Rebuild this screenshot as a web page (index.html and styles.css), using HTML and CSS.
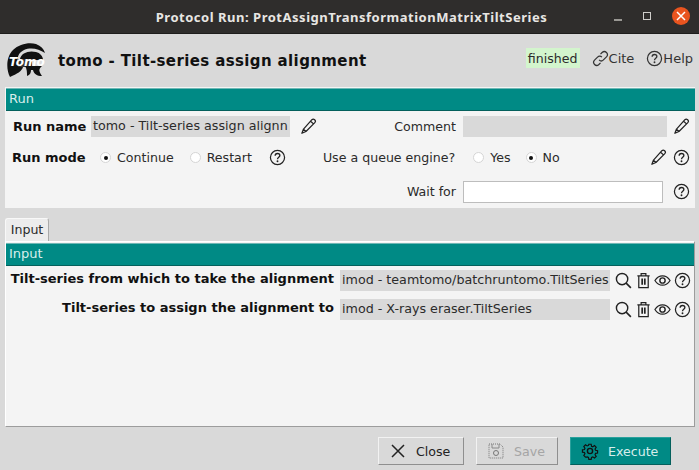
FILE: index.html
```html
<!DOCTYPE html>
<html lang="en">
<head>
    <meta charset="utf-8" />
    <title>Protocol Run</title>
    <link rel="stylesheet" href="styles.css">
</head>
<body>
    <svg class="sprites" width="0" height="0">
        <symbol id="i-pencil" viewBox="0 0 18 18">
            <path d="M12.6 1.8c.8-.8 2-.8 2.9.1s1 2.2.2 3L6.300 14.300 2 16.200l1.700-4.500zM11.200 3.400l3.400 3.100M3.700 11.800l2.600 2.500" fill="none" stroke="currentColor" stroke-width="1.300" stroke-linejoin="round"/>
        </symbol>
        <symbol id="i-help" viewBox="0 0 18 18">
            <circle cx="9" cy="9" r="7.500" fill="none" stroke="currentColor" stroke-width="1.300"/>
            <path d="M6.500 7.200c0-1.500 1.100-2.400 2.500-2.400s2.500.9 2.500 2.200c0 1.800-2.500 1.900-2.500 3.800" fill="none" stroke="currentColor" stroke-width="1.400"/>
            <circle cx="9" cy="13" r="1" fill="currentColor"/>
        </symbol>
        <symbol id="i-search" viewBox="0 0 18 18">
            <circle cx="7.500" cy="7.500" r="6" fill="none" stroke="currentColor" stroke-width="1.500"/>
            <path d="M11.800 11.800l5 5" stroke="currentColor" stroke-width="1.700"/>
        </symbol>
        <symbol id="i-trash" viewBox="0 0 18 18">
            <path d="M2.500 4h13M6.500 4V1.800h5V4M4 4v12.500h10V4" fill="none" stroke="currentColor" stroke-width="1.300"/>
            <path d="M7.600 7v6.500M10.400 7v6.500" stroke="currentColor" stroke-width="1.800"/>
        </symbol>
        <symbol id="i-eye" viewBox="0 0 18 18">
            <path d="M1 9c2-3.300 4.800-5 8-5s6 1.700 8 5c-2 3.300-4.800 5-8 5s-6-1.700-8-5z" fill="none" stroke="currentColor" stroke-width="1.300"/>
            <circle cx="9" cy="9" r="2.800" fill="none" stroke="currentColor" stroke-width="1.500"/>
        </symbol>
    </svg>

    <header class="titlebar">
        <span class="titlebar-text">Protocol Run: ProtAssignTransformationMatrixTiltSeries</span>
        <span class="win-controls">
            <span class="win-min"></span>
            <span class="win-max"></span>
            <span class="win-close">
                <svg width="10" height="10" viewBox="0 0 10 10"><path d="M1 1l8 8M9 1l-8 8" stroke="#fff" stroke-width="1.500"/></svg>
            </span>
        </span>
    </header>

    <main class="window">
        <section class="heading">
            <svg class="logo" width="40" height="36" viewBox="0 0 40 36">
                <path d="M3 34C-1 26-1 14 6 7 12 1 22-1 29 1c5 2 8 5 9 9-6-4-14-6-21-3-6 3-7 7-6 15l5 2c-1 4-6 7-13 10z" fill="#111"/>
                <path d="M13 16c1-6 9-9 16-7 4 1 7 4 7 8l-23 0z" fill="#111"/>
                <path d="M11 16h14v8H11z" fill="#333"/>
                <path d="M18 23h17c-3 3-4 4 0 10-5 0-8-2-9-6h-2c0 3-1 5-4 6 0-4 0-7-2-10z" fill="#111"/>
                <text class="logo-text" x="2" y="23">Tomo</text>
            </svg>
            <h1 class="title">tomo - Tilt-series assign alignment</h1>
            <span class="status">finished</span>
            <a class="head-link cite">
                <svg width="17" height="17" viewBox="0 0 18 18"><path d="M7.500 10.500c1.500 1.500 3.300 1.300 4.600 0l3.200-3.200c1.300-1.400 1.300-3.300 0-4.600s-3.200-1.300-4.600 0L9 4.400M10.500 7.500C9 6 7.200 6.200 5.900 7.500l-3.200 3.200c-1.300 1.400-1.300 3.300 0 4.600s3.200 1.300 4.600 0L9 13.600" fill="none" stroke="currentColor" stroke-width="1.300"/></svg>Cite
            </a>
            <a class="head-link help">
                <svg width="17" height="17"><use href="#i-help"/></svg>Help
            </a>
        </section>

        <section class="run-panel">
            <h2 class="band">Run</h2>
            <div class="run-row first">
                <label class="run-label bold name-label">Run name</label>
                <span class="field name-field">tomo - Tilt-series assign alignn</span>
                <svg class="icon pencil-a"><use href="#i-pencil"/></svg>
                <label class="right-label comment-label">Comment</label>
                <span class="field comment-field"></span>
                <svg class="icon pencil-b"><use href="#i-pencil"/></svg>
            </div>
            <div class="run-row second">
                <label class="run-label bold mode-label">Run mode</label>
                <span class="radio on continue"></span><span class="radio-text">Continue</span>
                <span class="radio restart"></span><span class="radio-text">Restart</span>
                <svg class="icon help-a"><use href="#i-help"/></svg>
                <label class="right-label queue-label">Use a queue engine?</label>
                <span class="radio yes"></span><span class="radio-text">Yes</span>
                <span class="radio on no"></span><span class="radio-text">No</span>
                <svg class="icon pencil-c"><use href="#i-pencil"/></svg>
                <svg class="icon help-b"><use href="#i-help"/></svg>
            </div>
            <div class="run-row third">
                <label class="right-label wait-label">Wait for</label>
                <input class="wait-input" type="text" />
                <svg class="icon help-c"><use href="#i-help"/></svg>
            </div>
        </section>

        <div class="tabs"><span class="tab">Input</span></div>

        <section class="input-panel">
            <h2 class="band">Input</h2>
            <div class="param-row">
                <label class="param-label">Tilt-series from which to take the alignment</label>
                <span class="field param-field">imod - teamtomo/batchruntomo.TiltSeries</span>
                <span class="param-icons">
                    <svg class="icon"><use href="#i-search"/></svg>
                    <svg class="icon"><use href="#i-trash"/></svg>
                    <svg class="icon"><use href="#i-eye"/></svg>
                    <svg class="icon"><use href="#i-help"/></svg>
                </span>
            </div>
            <div class="param-row">
                <label class="param-label">Tilt-series to assign the alignment to</label>
                <span class="field param-field">imod - X-rays eraser.TiltSeries</span>
                <span class="param-icons">
                    <svg class="icon"><use href="#i-search"/></svg>
                    <svg class="icon"><use href="#i-trash"/></svg>
                    <svg class="icon"><use href="#i-eye"/></svg>
                    <svg class="icon"><use href="#i-help"/></svg>
                </span>
            </div>
        </section>

        <footer class="actions">
            <button class="btn close-btn">
                <svg width="18" height="18" viewBox="0 0 18 18"><path d="M3 3l12 12M15 3L3 15" stroke="#222" stroke-width="1.500"/></svg>Close
            </button>
            <button class="btn save-btn">
                <svg width="18" height="18" viewBox="0 0 18 18"><path d="M2 2h11l3 3v11H2z" fill="none" stroke="#777" stroke-width="1" stroke-dasharray="1 1"/><path d="M5 2v4h7V2" fill="none" stroke="#888"/><circle cx="9" cy="11" r="2.500" fill="none" stroke="#777"/></svg>Save
            </button>
            <button class="btn exec-btn">
                <svg width="18" height="18" viewBox="0 0 18 18"><circle cx="9" cy="9" r="2.600" fill="none" stroke="#111" stroke-width="1.400"/><path d="M7.700 1.500h2.600l.4 2.200 1.400.6 1.900-1.300 1.900 1.900-1.300 1.900.6 1.400 2.200.4v2.600l-2.200.4-.6 1.400 1.300 1.900-1.900 1.900-1.900-1.300-1.400.6-.4 2.200H7.700l-.4-2.200-1.400-.6L4 15.900 2.100 14l1.300-1.900-.6-1.400-2.200-.4V7.700l2.200-.4.6-1.400L2.100 4 4 2.100l1.900 1.300 1.400-.6z" fill="none" stroke="#111" stroke-width="1.300" transform="translate(0.900 0.900) scale(0.9)"/></svg>Execute
            </button>
        </footer>
    </main>
</body>
</html>
```

FILE: styles.css
```css
* {
    box-sizing: border-box;
}

html, body {
    margin: 0;
    height: 470px;
    overflow: hidden;
}

body {
    font-family: "DejaVu Sans", sans-serif;
    font-size: 12.6px;
    color: #2b2b2b;
    background: #d9d9d9;
}

.sprites {
    position: absolute;
}

.titlebar {
    height: 34px;
    background: #2f2d2c;
    border-bottom: 1px solid #1e1d1c;
    color: #e8e6e3;
    position: relative;
    display: flex;
    align-items: center;
    justify-content: center;
}

.titlebar-text {
    font-family: "Noto Sans", sans-serif;
    font-weight: 700;
    font-size: 13px;
    letter-spacing: 0.52px;
    padding-left: 4px;
}

.win-controls {
    position: absolute;
    right: 9px;
    top: 7px;
    display: flex;
    align-items: center;
    gap: 21px;
}

.win-min {
    width: 8px;
    height: 2px;
    background: #9a9894;
    margin-top: 7px;
}

.win-max {
    width: 8px;
    height: 8px;
    border: 1px solid #cfcdca;
}

.win-close {
    width: 18px;
    height: 18px;
    border-radius: 50%;
    background: #e9541f;
    display: flex;
    align-items: center;
    justify-content: center;
}

.window {
    padding: 0 4px 0 5px;
}

/* header with logo */
.heading {
    height: 53px;
    display: flex;
    align-items: center;
    padding-left: 2px;
    padding-right: 2px;
}

.logo {
    flex: none;
}

.logo-text {
    font-family: "DejaVu Sans", sans-serif;
    font-style: italic;
    font-weight: 700;
    font-size: 12px;
    fill: #fff;
}

.title {
    margin: 0 0 0 11px;
    font-size: 15px;
    font-weight: 700;
    color: #111;
    flex: 1;
    letter-spacing: 0.38px;
}

.status {
    background: #d3f5cd;
    padding: 2px 2px;
    height: 20px;
    line-height: 17px;
    margin-top: -5px;
}

.head-link {
    display: flex;
    align-items: center;
    margin-top: -5px;
    font-size: 13px;
    color: #333;
}

.cite {
    margin-left: 12px;
}

.help {
    margin-left: 12px;
}

/* section bands */
.band {
    margin: 0;
    height: 23px;
    line-height: 20px;
    padding-left: 3px;
    font-size: 13px;
    font-weight: 400;
    color: #d8eeec;
    background: #008a85;
    border-top: 1px solid #6fb8b5;
    border-bottom: 1px solid #04605c;
}

/* run panel */
.run-panel {
    height: 121px;
    background: #f4f4f4;
    padding-top: 1px;
    padding-left: 1px;
}

.run-row {
    display: flex;
    align-items: center;
}

.run-row.first {
    margin-top: 5px;
    height: 21px;
}

.run-row.second {
    margin-top: 10px;
    height: 21px;
}

.run-row.third {
    margin-top: 12px;
    height: 23px;
}

.bold {
    font-size: 13px;
    font-weight: 700;
    color: #111;
}

.run-label {
    flex: none;
}

.name-label {
    margin-left: 7px;
    width: 78px;
}

.mode-label {
    margin-left: 6px;
    width: 79px;
    margin-right: 9px;
}

.field {
    display: block;
    background: #d9d9d9;
    font-size: 12.7px;
    height: 21px;
    line-height: 19px;
    padding-left: 2px;
    white-space: nowrap;
    overflow: hidden;
    flex: none;
}

.name-field {
    width: 199px;
}

.comment-field {
    width: 204px;
}

.icon {
    flex: none;
    width: 17px;
    height: 17px;
    color: #222;
}

.pencil-a {
    margin-left: 10px;
}

.right-label {
    flex: none;
    text-align: right;
}

.comment-label {
    width: 139px;
    margin-right: 7px;
}

.pencil-b {
    margin-left: 6px;
}

.radio {
    flex: none;
    width: 11px;
    height: 11px;
    border-radius: 50%;
    border: 1px solid #d5d5d5;
    background: #fff;
    margin-right: 6px;
    position: relative;
}

.radio.on::after {
    content: "";
    position: absolute;
    left: 2.500px;
    top: 2.500px;
    width: 4px;
    height: 4px;
    border-radius: 50%;
    background: #111;
}

.radio-text {
    flex: none;
}

.radio.restart {
    margin-left: 16px;
}

.help-a {
    margin-left: 17px;
}

.queue-label {
    margin-left: 37px;
}

.radio.yes {
    margin-left: 18px;
}

.radio.no {
    margin-left: 15px;
}

.pencil-c {
    margin-left: auto;
}

.help-b {
    margin-left: 6px;
}

.wait-label {
    margin-left: 399px;
    width: 51px;
    margin-right: 7px;
}

.wait-input {
    width: 200px;
    height: 22px;
    border: 1px solid #bdbdbd;
    background: #fff;
    padding: 0;
    flex: none;
}

.help-c {
    margin-left: 10px;
}

.second .help-b,
.third .help-c {
    margin-right: 5px;
}

/* tab */
.tabs {
    margin-top: 10px;
    height: 23px;
    display: flex;
}

.tab {
    width: 44px;
    height: 23px;
    line-height: 21px;
    text-align: center;
    background: #ececec;
    border: 1px solid #f8f8f8;
    border-right-color: #a9a9a9;
    border-bottom: none;
    border-radius: 3px 3px 0 0;
}

/* input panel */
.input-panel {
    height: 186px;
    background: #f4f4f4;
    border: 1px solid #fff;
    border-right-color: #9c9c9c;
    border-bottom-color: #9c9c9c;
    padding-top: 1px;
}

.param-row {
    display: flex;
    align-items: center;
    height: 21px;
    margin-top: 4px;
    margin-bottom: 8px;
}

.param-label {
    flex: none;
    width: 328px;
    text-align: right;
    font-size: 13px;
    font-weight: 700;
    color: #111;
    margin-right: 6px;
    margin-top: -4px;
}

.param-field {
    width: 270px;
}

.param-icons {
    display: flex;
    margin-left: 5px;
    gap: 2.500px;
}

/* bottom buttons */
.actions {
    display: flex;
    margin-top: 10px;
    padding-left: 373px;
    gap: 12px;
}

.btn {
    height: 28px;
    display: flex;
    align-items: center;
    font: inherit;
    padding: 0 0 0 10px;
    gap: 9px;
    background: #d9d9d9;
    border: 1px solid #f2f2f2;
    border-right-color: #8f8f8f;
    border-bottom-color: #8f8f8f;
    color: #222;
}

.close-btn {
    width: 86px;
}

.save-btn {
    width: 82px;
    color: #a5a5a5;
}

.exec-btn {
    width: 101px;
    background: #008a85;
    color: #d8eeec;
    border-color: #2aa09c #04605c #04605c #2aa09c;
}
```
